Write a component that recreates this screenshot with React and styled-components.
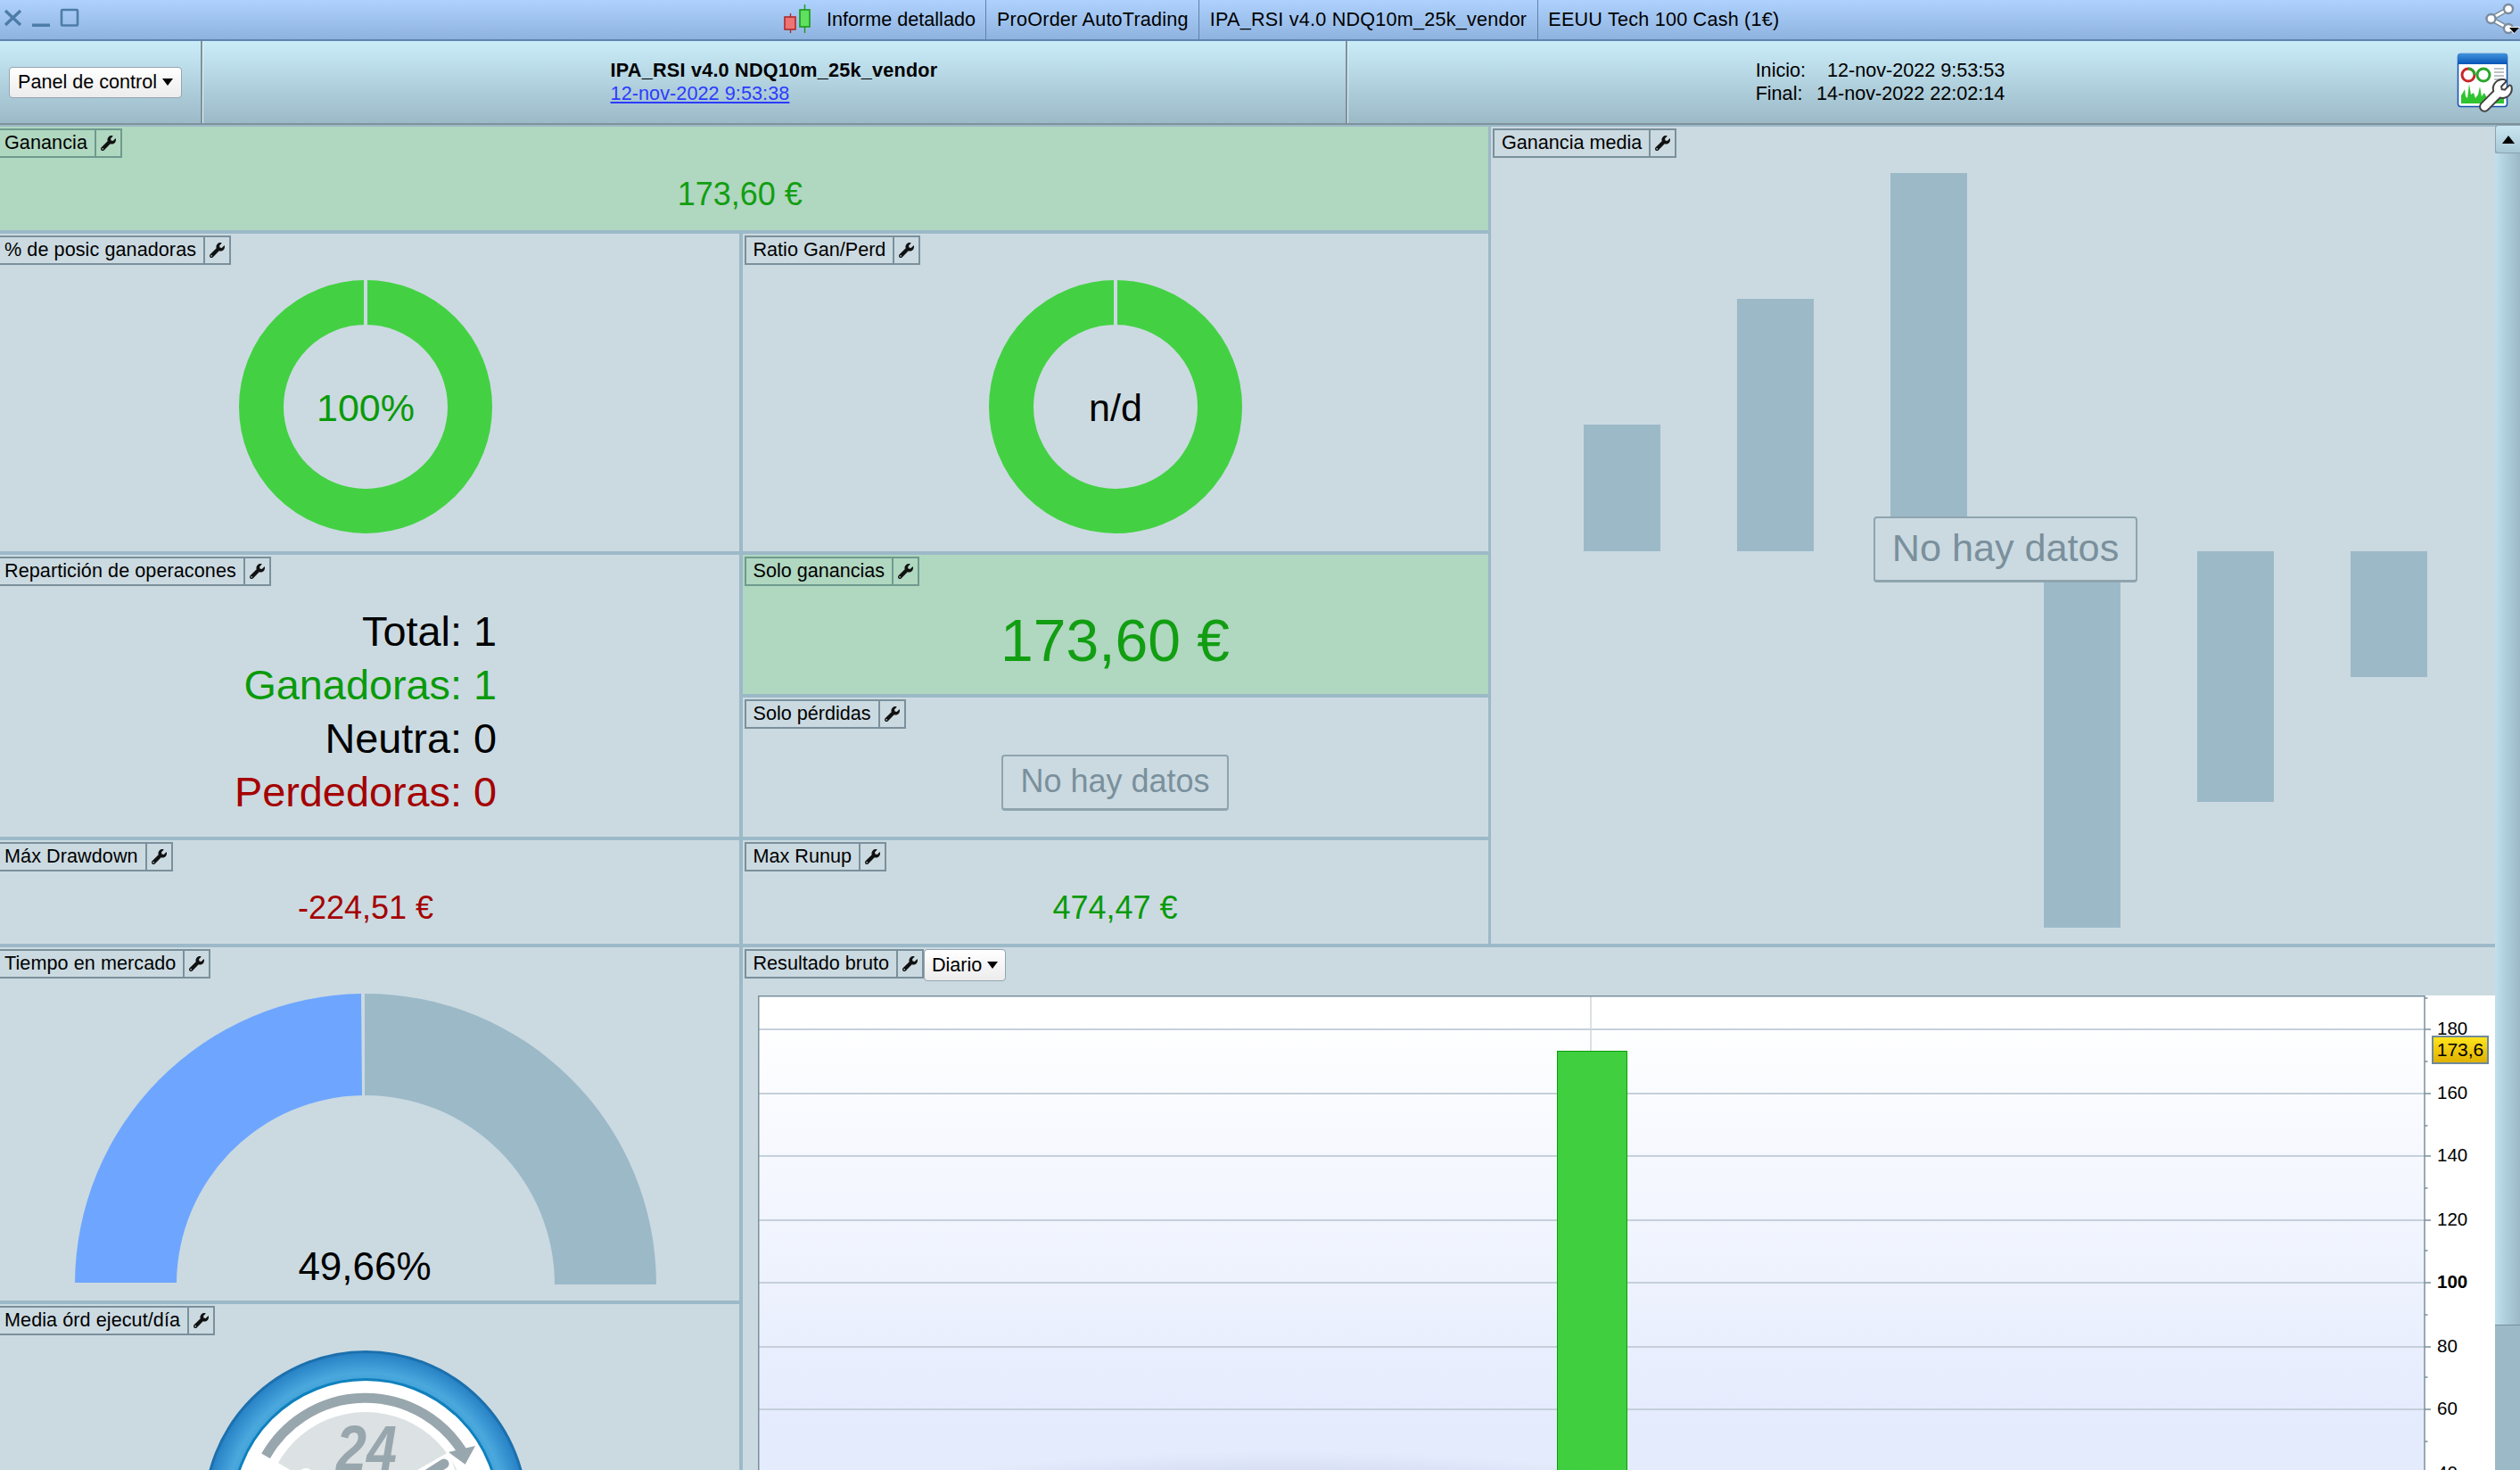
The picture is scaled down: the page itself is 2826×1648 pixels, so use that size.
import React from "react";
import styled, { createGlobalStyle } from "styled-components";
import { FaWrench } from "react-icons/fa";

const Global = createGlobalStyle`
  html, body { margin: 0; padding: 0; background: #cbdae1; overflow: hidden; }
  * { box-sizing: border-box; }
  body { font-family: "Liberation Sans", Arial, sans-serif; font-size: 21.6px; color: #000; }
`;

const Page = styled.div`
  width: 2826px;
  height: 1648px;
  overflow: hidden;
  display: flex;
  flex-direction: column;
`;

const TitleBar = styled.header`
  flex: none;
  height: 46px;
  display: flex;
  align-items: center;
  background: linear-gradient(#aed2fd, #8fb3df);
  border-bottom: 2px solid #5f84ad;
`;
const WindowControls = styled.svg`
  flex: none;
  width: 93px;
  height: 44px;
`;
const Tabs = styled.nav`
  margin: 0 auto;
  display: flex;
  align-items: stretch;
  height: 44px;
`;
const Tab = styled.div`
  display: flex;
  align-items: center;
  gap: 18px;
  padding: 0 11.5px;
  white-space: nowrap;
  letter-spacing: ${(p) => (p.$spread ? "0.22px" : "0")};
  border-right: 1px solid #5d82ab;
  &:first-child { padding-left: 0; }
  &:last-child { border-right: 0; }
`;
const ShareIcon = styled.svg`
  flex: none;
  width: 33px;
  height: 44px;
  overflow: visible;
`;

const Toolbar = styled.div`
  flex: none;
  height: 94px;
  display: flex;
  background: linear-gradient(#caecf9, #9cb9c6);
  border-bottom: 2px solid #7e929c;
`;
const ToolCell = styled.div`
  display: flex;
  align-items: center;
  justify-content: ${(p) => p.$justify || "center"};
  width: ${(p) => p.$width || "auto"};
  flex: ${(p) => (p.$width ? "none" : "1")};
  padding: ${(p) => p.$pad || "0"};
  border-right: ${(p) => (p.$line ? "2px solid #7e929c" : "0")};
  box-shadow: ${(p) => (p.$line ? "1px 0 0 #e6f2f6" : "none")};
`;
const DropButton = styled.button`
  font: inherit;
  color: #000;
  display: inline-flex;
  align-items: center;
  gap: 6px;
  height: ${(p) => p.$h || 35}px;
  padding: 0 ${(p) => p.$padX || 9}px;
  background: linear-gradient(#ffffff, #ececec);
  border: 1px solid #93a5b0;
  border-radius: 4px;
  white-space: nowrap;
`;
const Caret = styled.span`
  width: 0;
  height: 0;
  border-left: 6px solid transparent;
  border-right: 6px solid transparent;
  border-top: 8px solid #000;
`;
const TitleBlock = styled.div`
  line-height: 26px;
  white-space: nowrap;
`;
const StrategyName = styled.div`
  font-weight: 700;
  letter-spacing: 0.24px;
`;
const DateLink = styled.a`
  color: #2b3cff;
  text-decoration: underline;
  letter-spacing: 0.08px;
`;
const RangeTable = styled.div`
  display: grid;
  grid-template-columns: auto auto;
  column-gap: 12px;
  line-height: 26px;
  white-space: nowrap;
`;
const RangeValue = styled.span`
  text-align: right;
`;

const Main = styled.main`
  flex: 1;
  min-height: 0;
  display: flex;
`;
const Board = styled.div`
  flex: none;
  margin-left: -9px;
  padding-top: 2px;
  display: grid;
  grid-template-columns: 838px 836px 1126px;
  grid-template-rows: 116px 356px 316px 116px 396px 433px;
  column-gap: 3.5px;
  row-gap: 4px;
  align-content: start;
  background: #9cb9c8;
`;
const Panel = styled.section`
  grid-column: ${(p) => p.$col || "auto"};
  grid-row: ${(p) => p.$row || "auto"};
  position: relative;
  min-width: 0;
  min-height: 0;
  overflow: hidden;
  display: flex;
  flex-direction: column;
  background: ${(p) => (p.$green ? "#b0d7c0" : "#cbdae1")};
`;
const Stack = styled.div`
  grid-column: 2;
  grid-row: 3;
  display: grid;
  grid-template-rows: 156px 156px;
  row-gap: 4px;
`;
const HeaderRow = styled.div`
  flex: none;
  display: flex;
  align-items: flex-start;
  height: 33px;
  margin: 2px 0 0 2px;
`;
const Label = styled.div`
  flex: none;
  height: 33px;
  display: flex;
  align-items: stretch;
  border: 2px solid ${(p) => (p.$green ? "#6f9a8e" : "#7a909c")};
  white-space: nowrap;
`;
const LabelText = styled.span`
  display: flex;
  align-items: center;
  padding: 0 8px 1px ${(p) => (p.$edge ? "10px" : "8px")};
  letter-spacing: ${(p) => (p.$edge ? "0.07px" : "0")};
`;
const WrenchCell = styled.span`
  width: 29px;
  display: flex;
  align-items: center;
  justify-content: center;
  border-left: 2px solid ${(p) => (p.$green ? "#6f9a8e" : "#7a909c")};
  font-size: 17px;
  color: #111;
`;
const Body = styled.div`
  flex: 1;
  min-height: 0;
  position: relative;
  display: flex;
  align-items: center;
  justify-content: center;
  padding-left: ${(p) => p.$padLeft || 0}px;
`;
const Value = styled.div`
  font-size: ${(p) => p.$size || 36}px;
  color: ${(p) => p.$color || "#000"};
  white-space: nowrap;
`;
const SplitList = styled.div`
  text-align: right;
  font-size: 46.8px;
  line-height: 60px;
  white-space: nowrap;
`;
const SplitLine = styled.div`
  color: ${(p) => p.$color || "#000"};
`;
const NoData = styled.div`
  font-size: ${(p) => p.$size}px;
  color: #7a909c;
  height: ${(p) => p.$h}px;
  padding: 0 ${(p) => p.$padX}px 2px;
  display: flex;
  align-items: center;
  background: #cbdae1;
  border: 2px solid #8fa4ae;
  border-bottom-width: 3px;
  border-radius: 4px;
  white-space: nowrap;
`;
const NoDataOverlay = styled.div`
  position: absolute;
  left: 28px;
  right: 0;
  top: 0;
  bottom: 3px;
  display: flex;
  align-items: center;
  justify-content: center;
`;
const Graphic = styled.svg`
  flex: none;
  display: block;
  overflow: visible;
  margin-bottom: ${(p) => p.$lift || 0}px;
`;
const ChartArea = styled.div`
  position: relative;
  flex: none;
  margin: 19px 0 0 17.5px;
  height: 780px;
`;
const PriceBadge = styled.div`
  position: absolute;
  left: 1877px;
  top: 45px;
  width: 64px;
  height: 32px;
  display: flex;
  align-items: center;
  justify-content: center;
  font-size: 21px;
  background: linear-gradient(#ffe41d, #dfb100);
  border: 2px solid #6f8a9a;
`;
const Scrollbar = styled.aside`
  flex: none;
  width: 28px;
  display: flex;
  flex-direction: column;
  background: #9cb9c8;
`;
const ScrollButton = styled.div`
  flex: none;
  height: 32px;
  display: flex;
  align-items: center;
  justify-content: center;
  background: linear-gradient(#c9e6f1, #a9c8d6);
  border: 1px solid #8aa3b0;
  border-right: 0;
  border-radius: 4px 0 0 4px;
`;
const ScrollArrow = styled.span`
  width: 0;
  height: 0;
  border-left: 7px solid transparent;
  border-right: 7px solid transparent;
  border-bottom: 9px solid #000;
`;
const ScrollThumb = styled.div`
  flex: none;
  height: 1314px;
  background: linear-gradient(to right, #bfe0ec, #9bb8c6);
  border-bottom: 1px solid #7a909c;
`;

const PANEL = "#cbdae1";
const GREEN = "#43d143";

const Head = ({ title, green, edge, children }) => (
  <HeaderRow>
    <Label $green={green}>
      <LabelText $edge={edge}>{title}</LabelText>
      <WrenchCell $green={green}><FaWrench /></WrenchCell>
    </Label>
    {children}
  </HeaderRow>
);

const Donut = ({ text, color }) => (
  <Graphic $lift={3} width="284" height="284" viewBox="0 0 284 284">
    <circle cx="142" cy="142" r="117" fill="none" stroke={GREEN} strokeWidth="50" />
    <rect x="140" y="0" width="4" height="50" fill={PANEL} />
    <text x="142" y="158" textAnchor="middle" fontSize="43" fill={color} fontFamily="Liberation Sans, Arial, sans-serif">{text}</text>
  </Graphic>
);

const Gauge = () => (
  <Graphic $lift={2} width="652" height="326" viewBox="0 0 652 326">
    <path d="M0 324 A326 326 0 0 1 321 0 L322 114 A212 212 0 0 0 114 324 Z" fill="#6ea6ff" />
    <path d="M325 0 A326 326 0 0 1 652 326 L538 326 A212 212 0 0 0 325 114 Z" fill="#9cb9c8" />
    <text x="325" y="321" textAnchor="middle" fontSize="44" fill="#000" fontFamily="Liberation Sans, Arial, sans-serif">49,66%</text>
  </Graphic>
);

const Clock = () => (
  <Graphic width="364" height="364" viewBox="0 0 364 364">
    <defs>
      <radialGradient id="ringBlue" cx="50%" cy="50%" r="50%">
        <stop offset="0.8" stopColor="#3f9fd6" />
        <stop offset="0.87" stopColor="#4aa8dd" />
        <stop offset="1" stopColor="#2680c4" />
      </radialGradient>
    </defs>
    <circle cx="182" cy="182" r="180.5" fill="url(#ringBlue)" stroke="#1c70ad" strokeWidth="3" />
    <circle cx="182" cy="182" r="149.5" fill="#fff" stroke="#0f80bd" strokeWidth="3" />
    <circle cx="182" cy="182" r="113" fill="#dce1e3" />
    <path d="M70 118.3 A128.5 128.5 0 0 1 291 114" fill="none" stroke="#98a6ad" strokeWidth="11" />
    <polygon points="305,107 293.7,127.7 275,114" fill="#98a6ad" />
    <text x="149" y="135" textLength="68" lengthAdjust="spacingAndGlyphs" fontSize="72" fontWeight="700" fontStyle="italic" fill="#98a6ad" fontFamily="Liberation Sans, Arial, sans-serif">24</text>
    <polygon points="60,118 84,126 182,184 60,240" fill="#fff" />
    <circle cx="115" cy="141" r="9" fill="#fff" />
    <polygon points="275,114 240,134 182,182 300,182" fill="#fff" />
    <line x1="270" y1="127" x2="240" y2="146" stroke="#98a6ad" strokeWidth="11" strokeLinecap="round" />
  </Graphic>
);

const PLACEHOLDER_BARS = [
  { x: 0, y: 282, h: 142 },
  { x: 172, y: 141, h: 283 },
  { x: 344, y: 0, h: 424 },
  { x: 516, y: 424, h: 422 },
  { x: 688, y: 424, h: 281 },
  { x: 860, y: 424, h: 141 },
];

const PlaceholderBars = () => (
  <Graphic width="946" height="848" viewBox="0 0 946 848">
    {PLACEHOLDER_BARS.map((b) => (
      <rect key={b.x} x={b.x} y={b.y} width="86" height={b.h} fill="#9cb9c8" />
    ))}
  </Graphic>
);

const MAJOR = [
  { y: 38, t: "180" },
  { y: 110, t: "160" },
  { y: 180, t: "140" },
  { y: 252, t: "120" },
  { y: 322, t: "100", bold: true },
  { y: 394, t: "80" },
  { y: 464, t: "60" },
  { y: 536, t: "40" },
];
const MINOR = [3, 74, 146, 216, 286, 358, 428, 500, 572];

const ResultChart = () => (
  <Graphic width="1948" height="780" viewBox="0 0 1948 780">
    <defs>
      <linearGradient id="plotBg" x1="0" y1="0" x2="0" y2="1">
        <stop offset="0" stopColor="#ffffff" />
        <stop offset="0.03" stopColor="#ffffff" />
        <stop offset="0.62" stopColor="#e4ebfd" />
        <stop offset="1" stopColor="#e4ebfd" />
      </linearGradient>
      <radialGradient id="plotShade" cx="50%" cy="50%" r="50%">
        <stop offset="0" stopColor="#6a7498" stopOpacity="0.34" />
        <stop offset="0.6" stopColor="#6a7498" stopOpacity="0.22" />
        <stop offset="1" stopColor="#6a7498" stopOpacity="0" />
      </radialGradient>
    </defs>
    <rect x="0" y="0" width="1948" height="780" fill="#fff" />
    <rect x="0" y="0" width="1869" height="780" fill="url(#plotBg)" />
    {MAJOR.map((m) => (
      <line key={m.t} x1="0" x2="1869" y1={m.y} y2={m.y} stroke="#c5d0da" strokeWidth="2" />
    ))}
    <line x1="934" x2="934" y1="0" y2="62" stroke="#cfd6da" strokeWidth="1.5" />
    <rect x="896.5" y="62.5" width="78" height="720" fill="#3fcf3f" stroke="#0a9e0a" strokeWidth="1" />
    <ellipse cx="590" cy="640" rx="640" ry="130" fill="url(#plotShade)" />
    <line x1="0.75" x2="0.75" y1="0" y2="780" stroke="#7a909c" strokeWidth="1.5" />
    <line x1="0" x2="1869" y1="0.75" y2="0.75" stroke="#7a909c" strokeWidth="1.5" />
    <line x1="1869" x2="1869" y1="0" y2="780" stroke="#7a909c" strokeWidth="1.5" />
    {MAJOR.map((m) => (
      <g key={m.t}>
        <line x1="1869" x2="1876" y1={m.y} y2={m.y} stroke="#7a909c" strokeWidth="1.5" />
        <text x="1883" y={m.y + 6} fontSize="20.5" fontWeight={m.bold ? 700 : 400} fill="#000" fontFamily="Liberation Sans, Arial, sans-serif">{m.t}</text>
      </g>
    ))}
    {MINOR.map((y) => (
      <line key={y} x1="1869" x2="1872.5" y1={y} y2={y} stroke="#7a909c" strokeWidth="1.5" />
    ))}
  </Graphic>
);

const WRENCH =
  "M507.73 109.1c-2.24-9.03-13.54-12.09-20.12-5.51l-74.36 74.36-67.88-11.31-11.31-67.88 74.36-74.36c6.62-6.62 3.43-17.9-5.66-20.16-47.38-11.74-99.55.91-136.58 37.93-39.64 39.64-50.55 97.1-34.05 147.2L18.74 402.76c-24.99 24.99-24.99 65.51 0 90.5 24.99 24.99 65.51 24.99 90.5 0l213.21-213.21c50.12 16.71 107.47 5.68 147.37-34.22 37.07-37.07 49.7-89.32 37.91-136.73z";

const ReportIcon = () => (
  <Graphic width="60" height="64" viewBox="0 0 60 64">
    <defs>
      <linearGradient id="reportTop" x1="0" y1="0" x2="0" y2="1">
        <stop offset="0" stopColor="#3f93dc" />
        <stop offset="1" stopColor="#0a55b8" />
      </linearGradient>
    </defs>
    <rect x="0.5" y="0.5" width="55" height="59" rx="3" fill="#fff" stroke="#1050b0" strokeWidth="1.5" />
    <path d="M0 12 V3 a3 3 0 0 1 3-3 H53 a3 3 0 0 1 3 3 V12 Z" fill="url(#reportTop)" />
    <circle cx="12" cy="24" r="7" fill="none" stroke="#c62828" strokeWidth="3" />
    <path d="M12 17 a7 7 0 0 1 7 7" fill="none" stroke="#2aa52a" strokeWidth="3" />
    <circle cx="29" cy="24" r="7" fill="none" stroke="#2aa52a" strokeWidth="3" />
    <g stroke="#aab4bb" strokeWidth="1.6">
      <line x1="41" x2="52" y1="17" y2="17" />
      <line x1="41" x2="52" y1="21" y2="21" />
      <line x1="41" x2="52" y1="25" y2="25" />
      <line x1="41" x2="52" y1="29" y2="29" />
    </g>
    <path d="M4 56 V47 L6 44 L8 40 L9 48 L11 50 L13 34 L15 46 L18 44 L20 50 L23 46 L25 37 L27 48 L30 44 L33 50 L52 50 V56 Z" fill="#2fc42f" />
    <g transform="translate(26 30) scale(0.066)">
      <path d={WRENCH} fill="#fff" stroke="#444" strokeWidth="60" paintOrder="stroke" />
    </g>
  </Graphic>
);

export default function App() {
  return (
    <Page>
      <Global />
      <TitleBar>
        <WindowControls viewBox="0 0 93 44">
          <path d="M6 12 L23 28 M23 12 L6 28" stroke="#4e7ca8" strokeWidth="3.4" fill="none" />
          <rect x="36" y="26.5" width="20" height="3.5" fill="#4e7ca8" />
          <rect x="69" y="11" width="18" height="17.5" rx="1" fill="none" stroke="#4e7ca8" strokeWidth="2.6" />
        </WindowControls>
        <Tabs>
          <Tab>
            <svg width="30" height="34" viewBox="0 0 30 34">
              <path d="M23.5 0 V32" stroke="#1a9a1a" strokeWidth="1.4" />
              <path d="M7.5 10 V32" stroke="#b02a2a" strokeWidth="1.4" />
              <rect x="1" y="14" width="12" height="14" fill="#ee7474" stroke="#b02a2a" strokeWidth="1.6" />
              <rect x="18" y="6" width="11" height="19" fill="#5fe05f" stroke="#1a9a1a" strokeWidth="1.6" />
            </svg>
            Informe detallado
          </Tab>
          <Tab $spread>ProOrder AutoTrading</Tab>
          <Tab $spread>IPA_RSI v4.0 NDQ10m_25k_vendor</Tab>
          <Tab $spread>EEUU Tech 100 Cash (1€)</Tab>
        </Tabs>
        <ShareIcon viewBox="0 0 33 44">
          <path d="M20 10 L0.5 21 L20 32" fill="none" stroke="#7a8c9e" strokeWidth="6" />
          <path d="M20 10 L0.5 21 L20 32" fill="none" stroke="#fff" strokeWidth="3" />
          <circle cx="20" cy="10" r="5" fill="#fff" stroke="#7a8c9e" strokeWidth="2.4" />
          <circle cx="0.5" cy="21" r="5" fill="#fff" stroke="#7a8c9e" strokeWidth="2.4" />
          <circle cx="20" cy="32" r="5" fill="#fff" stroke="#7a8c9e" strokeWidth="2.4" />
          <polygon points="19,30 33,30 26,38" fill="#fff" />
          <polygon points="21,31 32,31 26.5,37" fill="#000" />
        </ShareIcon>
      </TitleBar>

      <Toolbar>
        <ToolCell $width="227px" $justify="flex-start" $pad="0 0 0 10px" $line>
          <DropButton>Panel de control<Caret /></DropButton>
        </ToolCell>
        <ToolCell $width="1284px" $line>
          <TitleBlock>
            <StrategyName>IPA_RSI v4.0 NDQ10m_25k_vendor</StrategyName>
            <DateLink href="#">12-nov-2022 9:53:38</DateLink>
          </TitleBlock>
        </ToolCell>
        <ToolCell>
          <RangeTable>
            <span>Inicio:</span><RangeValue>12-nov-2022 9:53:53</RangeValue>
            <span>Final:</span><RangeValue>14-nov-2022 22:02:14</RangeValue>
          </RangeTable>
        </ToolCell>
        <ToolCell $width="120px" $justify="flex-end" $pad="0 10px 0 0">
          <ReportIcon />
        </ToolCell>
      </Toolbar>

      <Main>
        <Board>
          <Panel $col="1 / 3" $row="1" $green>
            <Head title="Ganancia" green edge />
            <Body><Value $color="#129e12">173,60 €</Value></Body>
          </Panel>
          <Panel $col="3" $row="1 / 5">
            <Head title="Ganancia media" />
            <Body $padLeft={28}>
              <PlaceholderBars />
              <NoDataOverlay>
                <NoData $size={43.2} $h={74} $padX={19}>No hay datos</NoData>
              </NoDataOverlay>
            </Body>
          </Panel>
          <Panel $col="1" $row="2">
            <Head title="% de posic ganadoras" edge />
            <Body><Donut text="100%" color="#0a9a0a" /></Body>
          </Panel>
          <Panel $col="2" $row="2">
            <Head title="Ratio Gan/Perd" />
            <Body><Donut text="n/d" color="#000" /></Body>
          </Panel>
          <Panel $col="1" $row="3">
            <Head title="Repartición de operacones" edge />
            <Body>
              <SplitList>
                <SplitLine>Total: 1</SplitLine>
                <SplitLine $color="#0a9a0a">Ganadoras: 1</SplitLine>
                <SplitLine>Neutra: 0</SplitLine>
                <SplitLine $color="#a50000">Perdedoras: 0</SplitLine>
              </SplitList>
            </Body>
          </Panel>
          <Stack>
            <Panel $green>
              <Head title="Solo ganancias" green />
              <Body><Value $size={66} $color="#129e12">173,60 €</Value></Body>
            </Panel>
            <Panel>
              <Head title="Solo pérdidas" />
              <Body><NoData $size={36} $h={63} $padX={19}>No hay datos</NoData></Body>
            </Panel>
          </Stack>
          <Panel $col="1" $row="4">
            <Head title="Máx Drawdown" edge />
            <Body><Value $color="#a50000">-224,51 €</Value></Body>
          </Panel>
          <Panel $col="2" $row="4">
            <Head title="Max Runup" />
            <Body><Value $color="#0a9a0a">474,47 €</Value></Body>
          </Panel>
          <Panel $col="1" $row="5">
            <Head title="Tiempo en mercado" edge />
            <Body><Gauge /></Body>
          </Panel>
          <Panel $col="1" $row="6">
            <Head title="Media órd ejecut/día" edge />
            <Body><Clock /></Body>
          </Panel>
          <Panel $col="2 / 4" $row="5 / 7">
            <Head title="Resultado bruto">
              <DropButton $h={36} $padX={8}>Diario<Caret /></DropButton>
            </Head>
            <ChartArea>
              <ResultChart />
              <PriceBadge>173,6</PriceBadge>
            </ChartArea>
          </Panel>
        </Board>
        <Scrollbar>
          <ScrollButton><ScrollArrow /></ScrollButton>
          <ScrollThumb />
        </Scrollbar>
      </Main>
    </Page>
  );
}
